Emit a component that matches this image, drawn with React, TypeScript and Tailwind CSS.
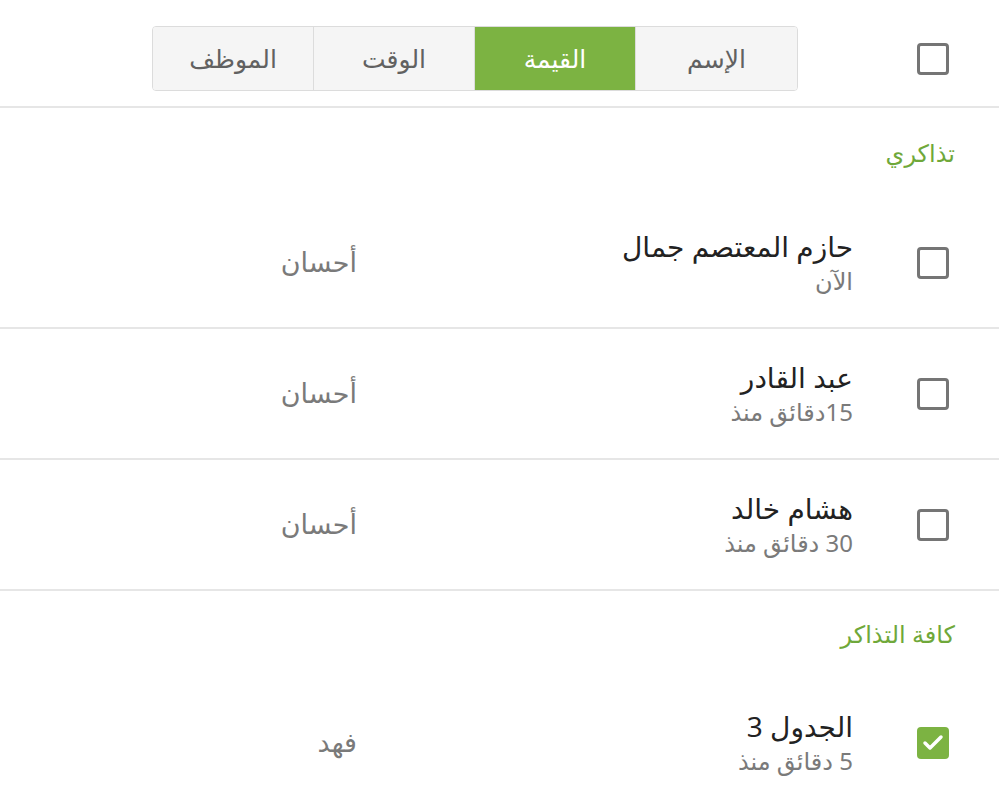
import { Check } from 'lucide-react';

const tabs = ['الإسم', 'القيمة', 'الوقت', 'الموظف'];

const myTickets = [
  { name: 'حازم المعتصم جمال', time: 'الآن', agent: 'أحسان' },
  { name: 'عبد القادر', time: '15دقائق منذ', agent: 'أحسان' },
  { name: 'هشام خالد', time: '30 دقائق منذ', agent: 'أحسان' },
];

function Box({ checked }: { checked?: boolean }) {
  if (checked) {
    return (
      <div className="w-[32px] h-[32px] rounded-[4px] bg-[#7cb342] flex items-center justify-center shrink-0">
        <Check className="w-[24px] h-[24px] text-white" strokeWidth={3.5} />
      </div>
    );
  }
  return <div className="w-[32px] h-[32px] rounded-[4px] border-[3px] border-[#757575] shrink-0" />;
}

function Row({ name, time, agent, checked, last }: { name: string; time: string; agent: string; checked?: boolean; last?: boolean }) {
  return (
    <div className={`flex items-center h-[131px] pr-[50px] ${last ? '' : 'border-b-2 border-[#e6e6e6]'}`}>
      <Box checked={checked} />
      <div className="w-[496px] mr-[64px] flex flex-col">
        <div className="text-[28px] leading-[36px] text-[#222222]">{name}</div>
        <div className="text-[24px] leading-[34px] text-[#7a7a7a]">{time}</div>
      </div>
      <div className="text-[27px] text-[#7a7a7a]">{agent}</div>
    </div>
  );
}

export default function App() {
  return (
    <div dir="rtl" className="w-[999px] h-[807px] overflow-hidden bg-white" style={{ fontFamily: '"Noto Sans", "DejaVu Sans", sans-serif' }}>
      <div className="flex items-start h-[108px] pt-[26px] pr-[50px] border-b-2 border-[#e6e6e6]">
        <div className="mt-[17px]">
          <Box />
        </div>
        <div className="mr-[119px] flex h-[65px] border border-[#dcdcdc] rounded-[4px] overflow-hidden">
          {tabs.map((t, i) => (
            <div
              key={t}
              className={`w-[161px] flex items-center justify-center text-[25px] ${i > 0 ? 'border-r border-[#dcdcdc]' : ''} ${i === 1 ? 'bg-[#7cb342] text-white' : 'bg-[#f5f5f5] text-[#616161]'}`}
            >
              {t}
            </div>
          ))}
        </div>
      </div>
      <div className="h-[90px] flex items-center pr-[44px] text-[24px] text-[#6fa83a]">تذاكري</div>
      {myTickets.map((r) => (
        <Row key={r.name} {...r} />
      ))}
      <div className="h-[86px] flex items-center pr-[44px] text-[24px] text-[#6fa83a]">كافة التذاكر</div>
      <Row name="الجدول 3" time="5 دقائق منذ" agent="فهد" checked last />
    </div>
  );
}
